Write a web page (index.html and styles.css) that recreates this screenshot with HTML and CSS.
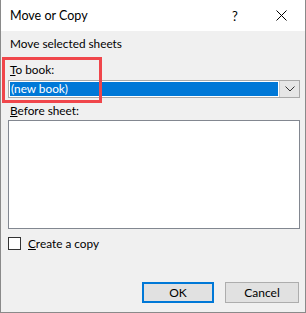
FILE: index.html
```html
<!DOCTYPE html>
<html>
<head>
<meta charset="utf-8">
<link rel="stylesheet" href="styles.css">
</head>
<body>
<div class="window">
  <div class="titlebar">
    <span class="title">Move or Copy</span>
    <span class="help">?</span>
    <svg class="close" width="11" height="11" viewBox="0 0 11 11"><path d="M0.5 0.5L10.5 10.5M10.5 0.5L0.5 10.5" stroke="#000" stroke-width="1"/></svg>
  </div>
  <div class="content">
    <div class="section">Move selected sheets</div>
    <div class="label"><u>T</u>o book:</div>
    <div class="select">
      <div class="option">(new book)</div>
      <div class="arrow"><svg width="10" height="6" viewBox="0 0 10 6"><path d="M0.5 0.5L5 5L9.5 0.5" fill="none" stroke="#333" stroke-width="1"/></svg></div>
    </div>
    <div class="label label2"><u>B</u>efore sheet:</div>
    <div class="listbox"></div>
    <label class="check"><span class="box"></span><span><u>C</u>reate a copy</span></label>
    <div class="buttons">
      <button class="btn default">OK</button>
      <button class="btn">Cancel</button>
    </div>
  </div>
  <div class="annotation"></div>
</div>
</body>
</html>
```
FILE: styles.css
```css
html, body { margin: 0; padding: 0; }
body {
  font-family: "Lato", "Noto Sans", sans-serif;
  font-size: 11.8px;
  color: #000;
  background: #f0f0f0;
}
.window {
  position: relative;
  width: 306px;
  height: 313px;
  box-sizing: border-box;
  border: 1px solid #8a8a8a;
  border-top: none;
  background: #f0f0f0;
  display: flex;
  flex-direction: column;
}
.titlebar {
  height: 31px;
  background: #fff;
  display: flex;
  align-items: center;
  padding-left: 9px;
  box-sizing: border-box;
}
.title { flex: 1; font-size: 12.5px; }
.help { width: 10px; margin-right: 34px; font-size: 13px; }
.close { margin-right: 18px; }
.content {
  flex: 1;
  padding: 0 6px 0 7px;
  display: flex;
  flex-direction: column;
}
.section { margin-top: 5px; line-height: 16px; padding-left: 2px; }
.label { margin-top: 10px; line-height: 16px; padding-left: 2px; }
.label2 { margin-top: 5px; }
.select {
  margin-top: 2px;
  height: 18px;
  box-sizing: border-box;
  border: 1px solid #a9a9a9;
  background: #fff;
  display: flex;
  width: 292px;
}
.option {
  flex: 1;
  margin: 1px;
  background: #0078d7;
  color: #fff;
  line-height: 14px;
  padding-left: 1px;
}
.arrow {
  width: 19px;
  background: #e6e6e6;
  border-left: 1px solid #c8c8c8;
  display: flex;
  align-items: center;
  justify-content: center;
}
.listbox {
  margin-top: 1px;
  height: 109px;
  width: 292px;
  box-sizing: border-box;
  border: 1px solid #828790;
  background: #fff;
}
.check {
  margin-top: 8px;
  display: flex;
  align-items: center;
  gap: 7px;
  line-height: 13px;
}
.box {
  width: 13px;
  height: 13px;
  box-sizing: border-box;
  border: 1px solid #333;
  background: #fff;
}
.buttons {
  margin-top: 32px;
  display: flex;
  justify-content: flex-end;
  gap: 11px;
}
.btn {
  width: 74px;
  height: 21px;
  box-sizing: border-box;
  font-family: inherit;
  font-size: 12px;
  background: #e1e1e1;
  border: 1px solid #adadad;
  padding: 0;
  color: #000;
}
.btn.default { border: 2px solid #0078d7; width: 72px; }
.annotation {
  position: absolute;
  left: 1px;
  top: 57px;
  width: 100px;
  height: 46px;
  box-sizing: border-box;
  border: 3px solid #f0464b;
}
```
